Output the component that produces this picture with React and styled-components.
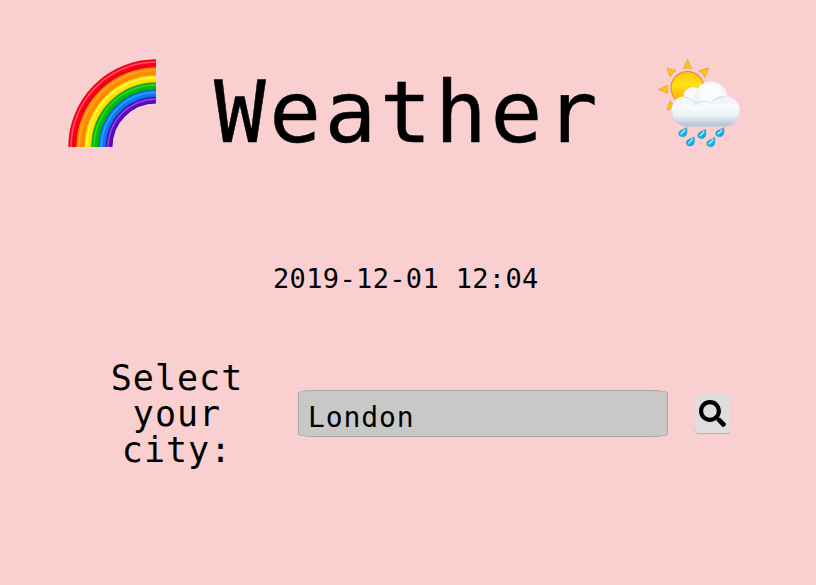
import React from "react";
import styled, { createGlobalStyle } from "styled-components";
import { FaSearch } from "react-icons/fa";

const GlobalStyle = createGlobalStyle`
  * { box-sizing: border-box; }
  body { margin: 0; background: #f9cfcf; color: #000; }
  body, input, button { font-family: "DejaVu Sans Mono", "Liberation Mono", monospace; }
`;

const Page = styled.main`
  height: 585px;
  overflow: hidden;
  display: flex;
  flex-direction: column;
  background: #f9cfcf;
`;

const Header = styled.header`
  display: flex;
  align-items: flex-start;
  height: 206px;
  padding: 54px 0 0 64px;
`;

const Title = styled.h1`
  width: 390px;
  margin: 5px 49px 0 54px;
  font-size: 86px;
  line-height: 106px;
  font-weight: 400;
  letter-spacing: 3.5px;
  white-space: nowrap;
  -webkit-text-stroke: 0.5px #000;
`;

const Picture = styled.svg`
  display: block;
  flex: none;
  width: 96px;
  height: 96px;
`;

const Timestamp = styled.time`
  height: 40px;
  margin: 53px 0 0 273px;
  font-size: 27px;
  line-height: 40px;
  letter-spacing: 0.35px;
  white-space: pre;
`;

const SearchForm = styled.form`
  display: flex;
  align-items: flex-start;
  margin-top: 61px;
  padding-left: 107px;
`;

const Label = styled.label`
  width: 140px;
  font-size: 35px;
  line-height: 36px;
  letter-spacing: 1px;
  text-align: center;
`;

const CityInput = styled.input`
  width: 370px;
  height: 47px;
  margin: 30px 0 0 51px;
  padding: 8px 0 0 9px;
  border: 1px solid #a7a7a7;
  border-radius: 15px / 3px;
  outline: none;
  background: #c8c8c8;
  color: #000;
  font-size: 28px;
  letter-spacing: 0.9px;
`;

const SearchButton = styled.button`
  display: flex;
  align-items: center;
  justify-content: center;
  width: 35px;
  height: 39px;
  margin: 34px 0 0 27px;
  padding: 0;
  border: 0;
  border-radius: 4px;
  background: #dedede;
  box-shadow: 0 1px 1px #b9adad;
  color: #000;
  font-size: 27px;
`;

const BANDS = [
  { id: "red", r: 83.5, w: 8.4, dark: "#e40020", mid: "#fa0018", light: "#ff5a62" },
  { id: "orange", r: 75.5, w: 8.4, dark: "#ff6c00", mid: "#ff8c00", light: "#ffac20" },
  { id: "yellow", r: 68, w: 7.8, dark: "#ffb800", mid: "#ffe600", light: "#fff95c" },
  { id: "green", r: 60.7, w: 7.8, dark: "#009b14", mid: "#00bd08", light: "#35dc2c" },
  { id: "blue", r: 53.3, w: 7.8, dark: "#0758d4", mid: "#087cf6", light: "#3fa3ff" },
  { id: "purple", r: 46.8, w: 6.4, dark: "#4100a5", mid: "#6209c7", light: "#a15ce9" },
];

function Rainbow() {
  return (
    <Picture viewBox="64 54 96 96" aria-label="rainbow">
      <defs>
        {BANDS.map(({ id, r, w, dark, mid, light }) => {
          const outer = r + w / 2;
          return (
            <radialGradient
              key={id}
              id={id}
              gradientUnits="userSpaceOnUse"
              cx="156"
              cy="147"
              r={outer}
            >
              <stop offset={(r - w / 2) / outer} stopColor={dark} />
              <stop offset={(r - w / 5) / outer} stopColor={mid} />
              <stop offset={r / outer} stopColor={mid} />
              <stop offset={(r + w / 6) / outer} stopColor={light} />
              <stop offset={(r + w / 3) / outer} stopColor={mid} />
              <stop offset="1" stopColor={dark} />
            </radialGradient>
          );
        })}
      </defs>
      {BANDS.map(({ id, r, w }) => (
        <path
          key={id}
          d={`M${156 - r} 147A${r} ${r} 0 0 1 156 ${147 - r}`}
          fill="none"
          stroke={`url(#${id})`}
          strokeWidth={w}
        />
      ))}
    </Picture>
  );
}

const DROPS = [
  [683, 132],
  [702, 133.8],
  [720, 132],
  [690.5, 141.3],
  [711, 142],
];

function SunShower() {
  return (
    <Picture viewBox="653 54 96 96" aria-label="sun, cloud and rain">
      <defs>
        <linearGradient id="sun" x1="0" y1="0" x2="0" y2="1">
          <stop offset="0" stopColor="#ffc400" />
          <stop offset=".4" stopColor="#ffe018" />
          <stop offset="1" stopColor="#ffa000" />
        </linearGradient>
        <radialGradient id="puff" cx=".5" cy=".4" r=".6">
          <stop offset=".45" stopColor="#fbfcfe" />
          <stop offset=".8" stopColor="#ecf0f4" />
          <stop offset="1" stopColor="#c9d3dc" />
        </radialGradient>
        <linearGradient id="cloud" x1="0" y1="0" x2="0" y2="1">
          <stop offset="0" stopColor="#eaf0f4" />
          <stop offset=".35" stopColor="#f8fafc" />
          <stop offset=".65" stopColor="#edf1f5" />
          <stop offset="1" stopColor="#acbecf" />
        </linearGradient>
        <linearGradient id="drop" x1="0" y1="0" x2="1" y2="1">
          <stop offset="0" stopColor="#087fbd" />
          <stop offset=".55" stopColor="#16b5ef" />
          <stop offset="1" stopColor="#0096dc" />
        </linearGradient>
      </defs>
      <g fill="#ffc40c" stroke="#eb9b32" strokeWidth=".7" strokeLinejoin="round">
        <path d="M687.5 59.5L683.5 68.5Q687.5 67.5 691.5 68.5Z" />
        <path d="M667 68L670 77Q672 73 676 70.8Z" />
        <path d="M708.5 68L699 70.8Q703 73 705 77.5Z" />
        <path d="M658.5 89.5L667.8 85.2Q666.8 89.5 667.8 93.5Z" />
        <path d="M667 110L670 100.5Q672 104.5 676 107Z" />
      </g>
      <circle cx="687.5" cy="88" r="16.5" fill="url(#sun)" stroke="#e8872f" strokeWidth="1.1" />
      <circle cx="693" cy="97" r="10" fill="url(#puff)" />
      <circle cx="711" cy="98" r="16.6" fill="url(#puff)" />
      <path
        d="M684 96.5C674 96.5 671.5 106 671.5 111.5C671.5 120 678 126.5 687 126.5H725C734 126.5 740 120 740 111.5C740 102 733 96 725 96C718 96 713 99 711 104C706 100 699 101 696 105C694 99.5 690 96.5 684 96.5Z"
        fill="url(#cloud)"
      />
      <g fill="none" stroke="#ccd5df" strokeWidth="1" opacity=".7">
        <path d="M684 97Q692 97 695 104" />
        <path d="M695 105.5C698 101 704 100 710 103" />
        <path d="M711 103Q715 96.5 725 96.5" />
        <path d="M672 112Q673 125.7 687 126H725Q738.5 125 739.5 111" />
      </g>
      {DROPS.map(([x, y]) => (
        <g key={`${x}-${y}`} transform={`translate(${x} ${y})`}>
          <path
            d="M3.6-4.6C4.7 0 3.8 4.8-.4 4.8C-3.2 4.8-4.8 3-4.2.7C-3.4-1.9.5-2.2 3.6-4.6Z"
            fill="url(#drop)"
            stroke="#3d92ba"
            strokeWidth=".4"
          />
          <path
            d="M1.7-2C1.4-.4-.3.3-2 1.7"
            fill="none"
            stroke="#a5eeff"
            strokeWidth="1.5"
            strokeLinecap="round"
          />
        </g>
      ))}
    </Picture>
  );
}

export default function App() {
  return (
    <>
      <GlobalStyle />
      <Page>
        <Header>
          <Rainbow />
          <Title>Weather</Title>
          <SunShower />
        </Header>
        <Timestamp>2019-12-01 12:04</Timestamp>
        <SearchForm onSubmit={(event) => event.preventDefault()}>
          <Label htmlFor="city">Select your city:</Label>
          <CityInput id="city" defaultValue="London" />
          <SearchButton type="submit" aria-label="Search">
            <FaSearch />
          </SearchButton>
        </SearchForm>
      </Page>
    </>
  );
}
